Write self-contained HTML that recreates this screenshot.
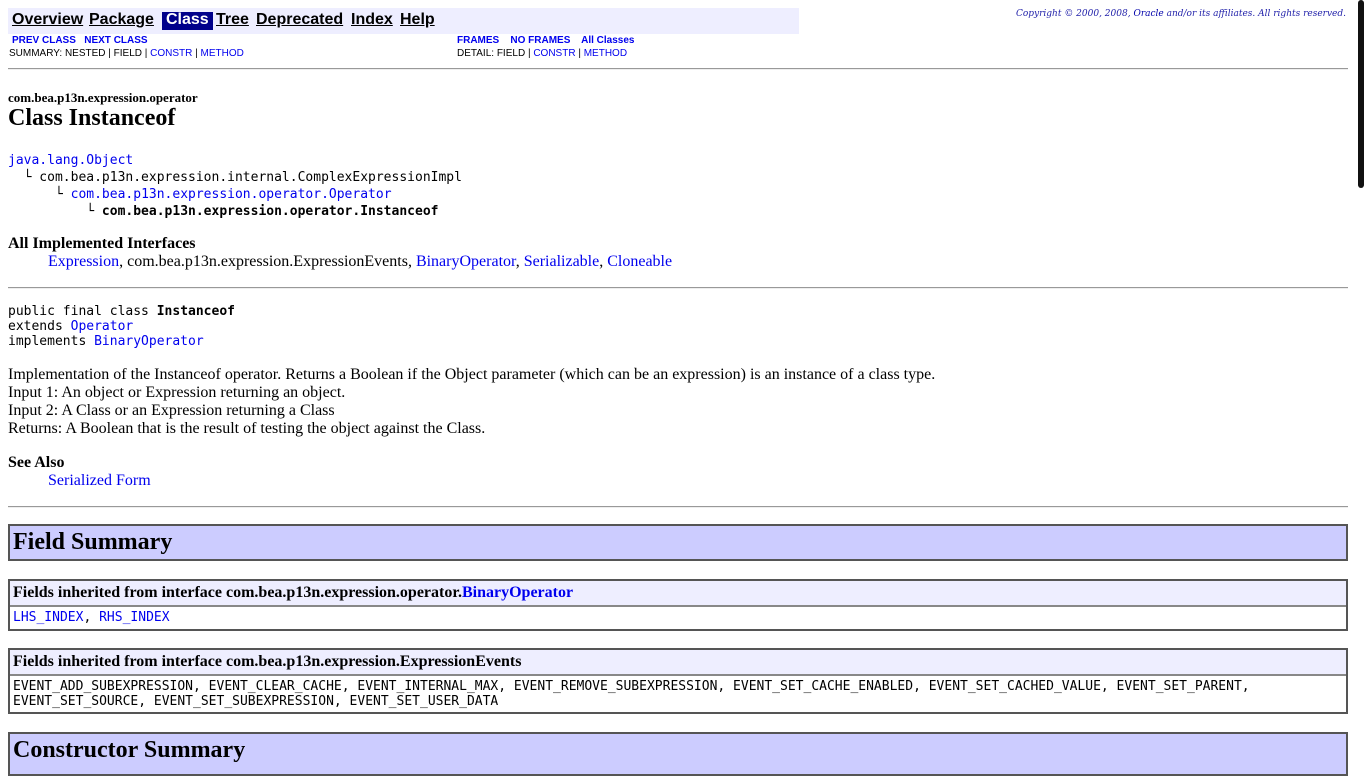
<!DOCTYPE html>
<html><head><meta charset="utf-8"><style>
body{margin:0;width:1366px;height:768px;overflow:hidden;background:#fff;font-family:"Liberation Serif",serif;font-size:16px;color:#000;position:relative}
.a{position:absolute;white-space:nowrap}
a{color:#00e}
.mono{font-family:"DejaVu Sans Mono","Liberation Mono",monospace;font-size:13px}
.nav{position:absolute;left:8px;top:8px;width:791px;height:26px;background:#eef}
.nav span{position:absolute;top:3px;font-family:"Liberation Sans",sans-serif;font-weight:bold;font-size:16px;text-decoration:underline;color:#000}
.sm{font-family:"Liberation Sans",sans-serif;font-size:10px}
.sm b a{font-weight:bold}
hr{position:absolute;left:8px;width:1340px;margin:0;border:0;border-top:1px solid #999;border-bottom:1px solid #eee;height:0}
.box{position:absolute;left:8px;width:1336px;border:2px solid #555;border-style:solid}
.hd{background:#ccf;font-weight:bold;font-size:24px;padding-left:3px}
.sh{background:#eef;font-weight:bold;font-size:16px;padding-left:3px;border-bottom:2px solid #888}
.row{padding-left:3px}
.sb{position:absolute;left:1358px;top:0;width:6px;height:188px;background:#111;border-radius:3px}
</style></head><body>
<div class="nav">
<span style="left:4px">Overview</span>
<span style="left:81px">Package</span>
<div style="position:absolute;left:154px;top:4px;width:51px;height:18px;background:#00008b"></div>
<span style="left:158px;color:#fff;text-decoration:none">Class</span>
<span style="left:208px">Tree</span>
<span style="left:248px">Deprecated</span>
<span style="left:343px">Index</span>
<span style="left:392px">Help</span>
</div>
<div class="a" style="right:20px;top:9px;font-family:'DejaVu Serif',serif;font-style:italic;font-size:9px;color:#22a">Copyright © 2000, 2008, <a style="color:#00a">Oracle</a> and/or its affiliates. All rights reserved.</div>
<div class="a sm" style="left:12px;top:35px;font-weight:bold"><a>PREV CLASS</a>&nbsp;&nbsp; <a>NEXT CLASS</a></div>
<div class="a sm" style="left:457px;top:35px;font-weight:bold"><a>FRAMES</a>&nbsp;&nbsp;&nbsp; <a>NO FRAMES</a>&nbsp;&nbsp;&nbsp; <a>All Classes</a></div>
<div class="a sm" style="left:9px;top:48px">SUMMARY: NESTED | FIELD | <a>CONSTR</a> | <a>METHOD</a></div>
<div class="a sm" style="left:457px;top:48px">DETAIL: FIELD | <a>CONSTR</a> | <a>METHOD</a></div>
<hr style="top:68px">
<div class="a" style="left:8px;top:90px;font-size:13px;font-weight:bold">com.bea.p13n.expression.operator</div>
<div class="a" style="left:8px;top:105px;font-size:24px;font-weight:bold">Class Instanceof</div>
<div class="a mono" style="left:8px;top:152px;line-height:17px"><a>java.lang.Object</a><br>&nbsp;&nbsp;└ com.bea.p13n.expression.internal.ComplexExpressionImpl<br>&nbsp;&nbsp;&nbsp;&nbsp;&nbsp;&nbsp;└ <a>com.bea.p13n.expression.operator.Operator</a><br>&nbsp;&nbsp;&nbsp;&nbsp;&nbsp;&nbsp;&nbsp;&nbsp;&nbsp;&nbsp;└ <b>com.bea.p13n.expression.operator.Instanceof</b></div>
<div class="a" style="left:8px;top:235px;font-weight:bold">All Implemented Interfaces</div>
<div class="a" style="left:48px;top:253px"><a>Expression</a>, com.bea.p13n.expression.ExpressionEvents, <a>BinaryOperator</a>, <a>Serializable</a>, <a>Cloneable</a></div>
<hr style="top:287px">
<div class="a mono" style="left:8px;top:304px;line-height:15px">public final class <b>Instanceof</b><br>extends <a>Operator</a><br>implements <a>BinaryOperator</a></div>
<div class="a" style="left:8px;top:366px;line-height:18px">Implementation of the Instanceof operator. Returns a Boolean if the Object parameter (which can be an expression) is an instance of a class type.<br>Input 1: An object or Expression returning an object.<br>Input 2: A Class or an Expression returning a Class<br>Returns: A Boolean that is the result of testing the object against the Class.</div>
<div class="a" style="left:8px;top:454px;font-weight:bold">See Also</div>
<div class="a" style="left:48px;top:472px"><a>Serialized Form</a></div>
<hr style="top:506px">
<div class="box" style="top:524px;height:33px"><div class="hd" style="line-height:33px;height:33px">Field Summary</div></div>
<div class="box" style="top:579px"><div class="sh" style="height:24px;line-height:24px">Fields inherited from interface com.bea.p13n.expression.operator.<a>BinaryOperator</a></div><div class="row mono" style="height:22px;line-height:22px"><a>LHS_INDEX</a>, <a>RHS_INDEX</a></div></div>
<div class="box" style="top:648px"><div class="sh" style="height:24px;line-height:24px">Fields inherited from interface com.bea.p13n.expression.ExpressionEvents</div><div class="row mono" style="line-height:15px;padding-top:3px;padding-bottom:3px">EVENT_ADD_SUBEXPRESSION, EVENT_CLEAR_CACHE, EVENT_INTERNAL_MAX, EVENT_REMOVE_SUBEXPRESSION, EVENT_SET_CACHE_ENABLED, EVENT_SET_CACHED_VALUE, EVENT_SET_PARENT,<br>EVENT_SET_SOURCE, EVENT_SET_SUBEXPRESSION, EVENT_SET_USER_DATA</div></div>
<div class="box" style="top:732px;height:40px"><div class="hd" style="line-height:33px;height:40px">Constructor Summary</div></div>
<div class="sb"></div>
</body></html>
